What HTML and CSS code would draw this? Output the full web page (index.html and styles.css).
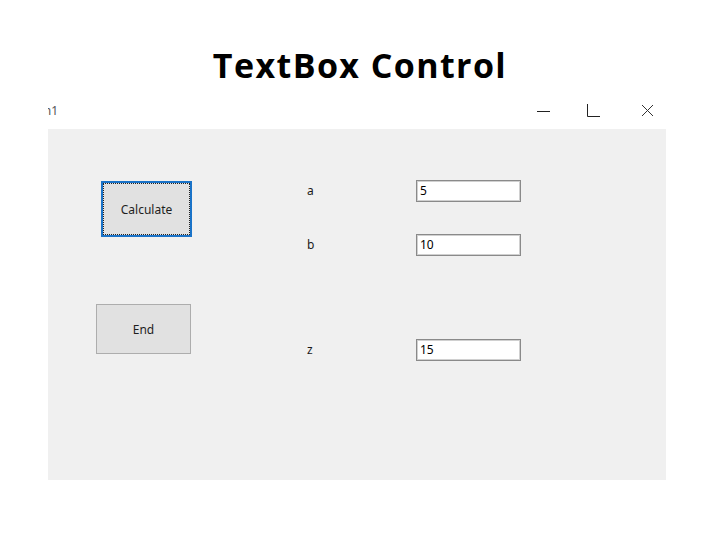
FILE: index.html
```html
<!DOCTYPE html>
<html>
<head>
<meta charset="utf-8">
<link rel="stylesheet" href="styles.css">
</head>
<body>
<header class="head">
  <h1 class="title">TextBox Control</h1>
</header>
<div class="window">
  <div class="titlebar">
    <div class="caption"><span>Form1</span></div>
    <div class="controls">
      <svg class="ctl ctl-min" width="13" height="13" viewBox="0 0 13 13"><path d="M0 7.5H13" stroke="#222" stroke-width="1" fill="none"/></svg>
      <svg class="ctl ctl-max" width="13" height="13" viewBox="0 0 13 13"><path d="M0.5 0V12.5H13" stroke="#222" stroke-width="1" fill="none"/></svg>
      <svg class="ctl ctl-close" width="13" height="13" viewBox="0 0 13 13"><path d="M1 1L12 12M12 1L1 12" stroke="#333" stroke-width="1" fill="none"/></svg>
    </div>
  </div>
  <div class="form">
    <div class="btncol">
      <div class="btn calc"><span>Calculate</span></div>
      <div class="btn end"><span>End</span></div>
    </div>
    <div class="fields">
      <div class="lbl">a</div>
      <div class="tb">5</div>
      <div class="lbl">b</div>
      <div class="tb">10</div>
      <div class="lbl zrow">z</div>
      <div class="tb zrow">15</div>
    </div>
  </div>
</div>
</body>
</html>
```
FILE: styles.css
```css
html, body {
  margin: 0;
  padding: 0;
  background: #ffffff;
}
body {
  width: 720px;
  height: 540px;
  overflow: hidden;
  font-family: "Noto Sans", "DejaVu Sans", sans-serif;
}
.head {
  height: 96px;
  display: flex;
  justify-content: center;
  align-items: flex-start;
}
.title {
  margin: 0;
  padding-top: 43px;
  font-family: "Open Sans", Lato, "Liberation Sans", sans-serif;
  font-weight: 700;
  font-size: 34px;
  letter-spacing: 1.4px;
  line-height: 44px;
  color: #000;
  transform: translateX(0px);
}
.window {
  margin-left: 48px;
  width: 618px;
}
.titlebar {
  height: 33px;
  display: flex;
  align-items: flex-start;
}
.caption {
  width: 10px;
  margin-top: 7px;
  overflow: hidden;
  display: flex;
  justify-content: flex-end;
  white-space: nowrap;
  font-size: 12px;
  line-height: 16px;
  color: #555;
}
.caption span {
  flex: none;
}
.controls {
  margin-left: auto;
  margin-right: 12px;
  margin-top: 8px;
  display: flex;
}
.ctl {
  display: block;
}
.ctl-max {
  margin-left: 37px;
}
.ctl-close {
  margin-left: 41px;
}
.form {
  height: 351px;
  background: #f0f0f0;
  display: flex;
  align-items: flex-start;
}
.btncol {
  display: flex;
  flex-direction: column;
  align-items: flex-start;
  padding: 52px 0 0 48px;
  width: 95px;
}
.btn {
  box-sizing: border-box;
  background: #e1e1e1;
  display: flex;
  align-items: center;
  justify-content: center;
  font-size: 12px;
  color: #1e1e1e;
}
.calc {
  margin-left: 5px;
  width: 91px;
  height: 56px;
  border: 2px solid #1a73c8;
  outline: 1px dotted #222;
  outline-offset: -3px;
}
.end {
  margin-top: 67px;
  width: 95px;
  height: 50px;
  border: 1px solid #adadad;
}
.fields {
  margin-left: 116px;
  padding-top: 51px;
  display: grid;
  grid-template-columns: 109px 105px;
  row-gap: 32px;
  align-items: center;
}
.lbl {
  font-size: 12px;
  line-height: 16px;
  color: #1a1a1a;
}
.tb {
  box-sizing: border-box;
  height: 22px;
  background: #fff;
  border: 1px solid #8a8a8a;
  box-shadow: inset 0 0 0 1px #d0d0d0;
  padding-left: 3px;
  font-size: 12px;
  line-height: 20px;
  color: #000;
}
.zrow {
  margin-top: 51px;
}
```
